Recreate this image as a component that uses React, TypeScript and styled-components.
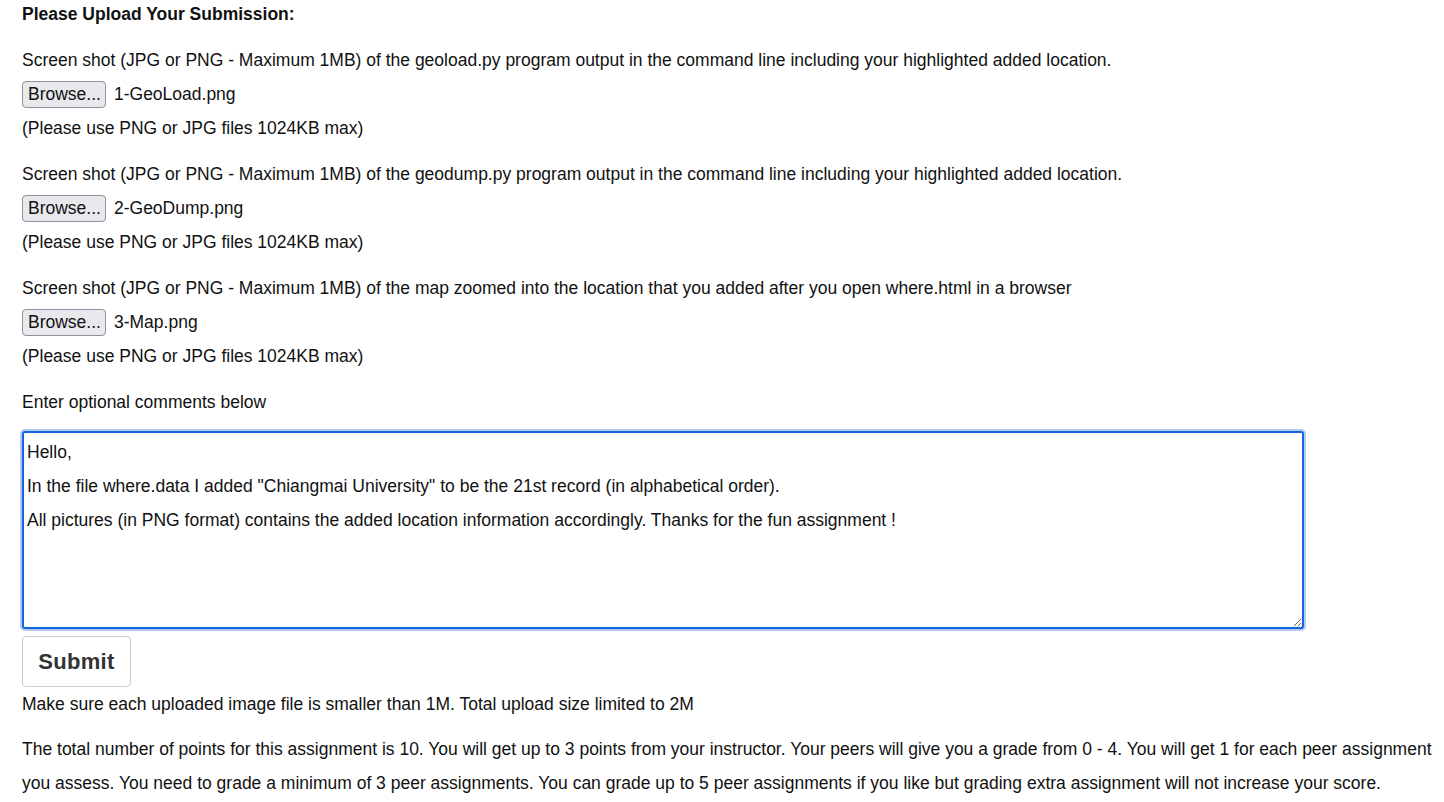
import React from "react";
import styled, { createGlobalStyle } from "styled-components";

const Global = createGlobalStyle`
  html, body { margin: 0; padding: 0; background: #fff; }
  body { font-family: "Liberation Sans", Arial, sans-serif; font-size: 17.5px; color: #111; }
`;

const Page = styled.form`
  padding: 0 8px 0 22px;
  line-height: 34px;
`;

const Heading = styled.h4`
  margin: 0;
  font-size: 17.5px;
  font-weight: bold;
  line-height: 28px;
  margin-bottom: 15px;
`;

const Block = styled.div`
  margin-bottom: 12px;
`;

const Line = styled.div`
  height: 34px;
  line-height: 34px;
  white-space: nowrap;
`;

const FileRow = styled.div`
  height: 34px;
  display: flex;
  align-items: center;
  gap: 8px;
`;

const BrowseButton = styled.button`
  font-family: "Liberation Sans", Arial, sans-serif;
  font-size: 17.5px;
  height: 27px;
  padding: 0 4px 0 5px;
  background: #e9e9ed;
  border: 1px solid #8f8f9d;
  border-radius: 4px;
  color: #111;
  line-height: 23px;
`;

const FileName = styled.span`
  line-height: 26px;
`;

const Comments = styled.textarea`
  display: block;
  box-sizing: border-box;
  width: 1282px;
  height: 198px;
  margin: 12px 0 0 0;
  padding: 2px 3px;
  border: 2px solid #1565e0;
  border-radius: 3px;
  box-shadow: 0 0 0 2px #b3cbf1;
  outline: none;
  font-family: "Liberation Sans", Arial, sans-serif;
  font-size: 17.5px;
  line-height: 34px;
  color: #111;
  resize: both;
`;

const Submit = styled.button`
  display: block;
  margin-top: 7px;
  width: 109px;
  height: 51px;
  background: #fff;
  border: 1px solid #ccc;
  border-radius: 4px;
  font-family: "Liberation Sans", Arial, sans-serif;
  font-size: 22px;
  font-weight: bold;
  color: #333;
  letter-spacing: 0.3px;
`;

const Para = styled.p<{ $gap?: number }>`
  margin: ${(p) => p.$gap ?? 0}px 0 0 0;
  line-height: 34px;
`;

const blocks = [
  {
    label:
      "Screen shot (JPG or PNG - Maximum 1MB) of the geoload.py program output in the command line including your highlighted added location.",
    file: "1-GeoLoad.png",
  },
  {
    label:
      "Screen shot (JPG or PNG - Maximum 1MB) of the geodump.py program output in the command line including your highlighted added location.",
    file: "2-GeoDump.png",
  },
  {
    label:
      "Screen shot (JPG or PNG - Maximum 1MB) of the map zoomed into the location that you added after you open where.html in a browser",
    file: "3-Map.png",
  },
];

const commentText =
  'Hello,\nIn the file where.data I added "Chiangmai University" to be the 21st record (in alphabetical order).\nAll pictures (in PNG format) contains the added location information accordingly. Thanks for the fun assignment !';

export default function App() {
  return (
    <>
      <Global />
      <Page onSubmit={(e) => e.preventDefault()}>
        <Heading>Please Upload Your Submission:</Heading>
        {blocks.map((b) => (
          <Block key={b.file}>
            <Line>{b.label}</Line>
            <FileRow>
              <BrowseButton type="button">Browse...</BrowseButton>
              <FileName>{b.file}</FileName>
            </FileRow>
            <Line>(Please use PNG or JPG files 1024KB max)</Line>
          </Block>
        ))}
        <Line>Enter optional comments below</Line>
        <Comments defaultValue={commentText} spellCheck={false} />
        <Submit type="submit">Submit</Submit>
        <Para>Make sure each uploaded image file is smaller than 1M. Total upload size limited to 2M</Para>
        <Para $gap={11}>
          The total number of points for this assignment is 10. You will get up to 3 points from your
          instructor. Your peers will give you a grade from 0 - 4. You will get 1 for each peer assignment
          you assess. You need to grade a minimum of 3 peer assignments. You can grade up to 5 peer
          assignments if you like but grading extra assignment will not increase your score.
        </Para>
      </Page>
    </>
  );
}
